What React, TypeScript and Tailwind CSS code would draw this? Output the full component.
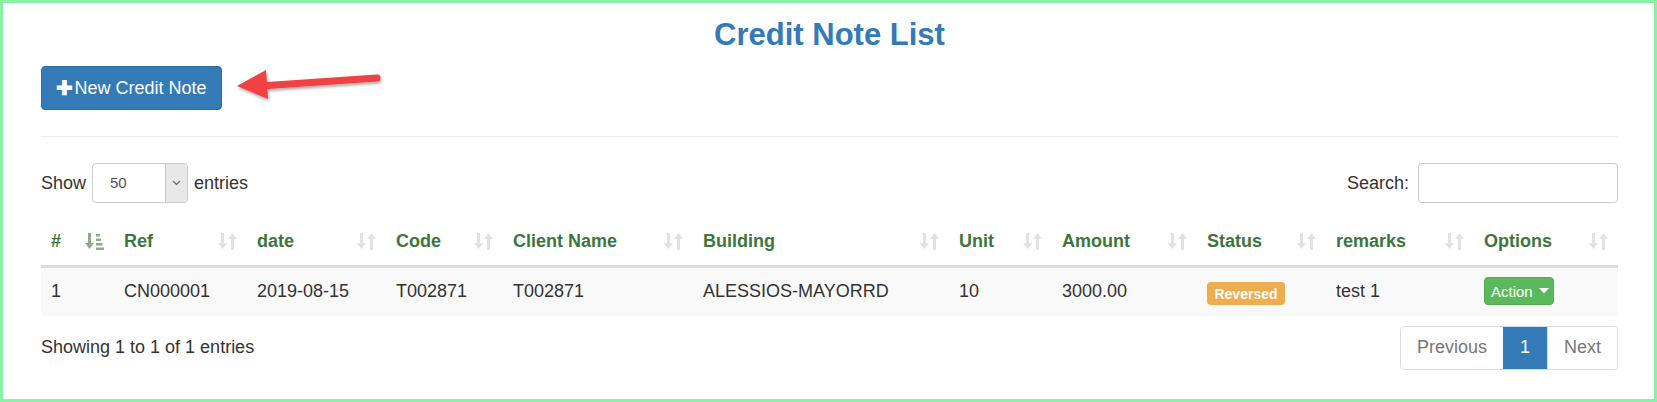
import React from "react";

function SortIcon() {
  return (
    <svg width="19" height="17" viewBox="0 0 19 17" className="shrink-0">
      <g fill="#e2e2e2">
        <rect x="3" y="0" width="3" height="11" />
        <polygon points="0,10 9,10 4.5,16" />
        <polygon points="10,6 19,6 14.5,0" />
        <rect x="13" y="5" width="3" height="12" />
      </g>
    </svg>
  );
}

function SortAscIcon() {
  return (
    <svg width="19" height="17" viewBox="0 0 19 17" className="shrink-0">
      <g fill="#3c763d" opacity="0.6">
        <rect x="3" y="0" width="3" height="11" />
        <polygon points="0,10 9,10 4.5,16" />
        <rect x="11" y="1" width="4" height="2.5" />
        <rect x="11" y="5.5" width="5" height="2.5" />
        <rect x="11" y="10" width="6.5" height="2.5" />
        <rect x="11" y="14.5" width="8" height="2.5" />
      </g>
    </svg>
  );
}

const cols = [
  { label: "#", w: 73, asc: true },
  { label: "Ref", w: 133 },
  { label: "date", w: 139 },
  { label: "Code", w: 117 },
  { label: "Client Name", w: 190 },
  { label: "Building", w: 256 },
  { label: "Unit", w: 103 },
  { label: "Amount", w: 145 },
  { label: "Status", w: 129 },
  { label: "remarks", w: 148 },
  { label: "Options", w: 144 },
];

const td = "px-[10px] pt-0 pb-[1px] leading-[26px] align-middle whitespace-nowrap";

export default function App() {
  return (
    <div className="w-[1657px] h-[402px] border-[3px] border-[#88f1a8] bg-white font-['Liberation_Sans',Arial,sans-serif] text-[#333] overflow-hidden">
      <div className="pl-[38px] pr-[36px]">
        <h1 className="mt-[15px] text-center text-[31px] leading-[34px] font-bold text-[#337ab7]">
          Credit Note List
        </h1>
        <div className="mt-[14px] flex items-start">
          <button className="w-[181px] h-[44px] bg-[#337ab7] border border-[#2e6da4] rounded-[4px] text-white text-[18px] leading-none flex items-center justify-center">
            <span className="font-bold text-[20px] mr-[1px] -mt-[1px]">✚</span>
            <span>New Credit Note</span>
          </button>
          <svg width="160" height="44" viewBox="0 0 160 44" className="ml-[8px]">
            <defs>
              <filter id="sh" x="-20%" y="-40%" width="140%" height="180%">
                <feDropShadow dx="1" dy="2" stdDeviation="1.5" floodColor="#000" floodOpacity="0.35" />
              </filter>
            </defs>
            <g filter="url(#sh)">
              <line x1="30" y1="20" x2="147" y2="12" stroke="#f04343" strokeWidth="7" strokeLinecap="round" />
              <polygon points="7,20 36,4 38,33" fill="#f04343" />
            </g>
          </svg>
        </div>
        <div className="mt-[26px] border-t border-[#eee]" />
        <div className="mt-[26px] flex justify-between items-center h-[40px] text-[18px]">
          <div className="flex items-center">
            <span>Show</span>
            <div className="ml-[6px] mr-[6px] w-[96px] h-[40px] border border-[#ccc] rounded-[4px] flex overflow-hidden">
              <div className="flex-1 flex items-center pl-[17px] text-[15px] text-[#555]">50</div>
              <div className="w-[22px] bg-[#e8e8e8] border-l border-[#c8c8c8] flex items-center justify-center">
                <svg width="9" height="6" viewBox="0 0 9 6">
                  <polyline points="1,1 4.5,4.5 8,1" fill="none" stroke="#666" strokeWidth="1.2" />
                </svg>
              </div>
            </div>
            <span>entries</span>
          </div>
          <div className="flex items-center">
            <span className="mr-[9px]">Search:</span>
            <div className="w-[200px] h-[40px] border border-[#ccc] rounded-[4px] bg-white" />
          </div>
        </div>
        <table className="mt-[16px] w-[1577px] table-fixed border-collapse text-[18px]">
          <colgroup>
            {cols.map((c) => (
              <col key={c.label} style={{ width: c.w }} />
            ))}
          </colgroup>
          <thead>
            <tr className="border-b-[3px] border-[#ddd]">
              {cols.map((c) => (
                <th key={c.label} className="px-[10px] pt-[9px] pb-[11px] text-left font-bold text-[#3c763d] leading-[26px]">
                  <div className="flex items-center justify-between">
                    <span className="whitespace-nowrap">{c.label}</span>
                    {c.asc ? <SortAscIcon /> : <SortIcon />}
                  </div>
                </th>
              ))}
            </tr>
          </thead>
          <tbody>
            <tr className="bg-[#f9f9f9] h-[49px]">
              {[
                "1",
                "CN000001",
                "2019-08-15",
                "T002871",
                "T002871",
                "ALESSIOS-MAYORRD",
                "10",
                "3000.00",
              ].map((v, i) => (
                <td key={i} className={td}>
                  {v}
                </td>
              ))}
              <td className={td}>
                <span className="inline-flex items-center justify-center w-[78px] h-[23px] rounded-[4px] bg-[#f0ad4e] text-white text-[14px] leading-none font-bold align-middle translate-y-[1px]">
                  Reversed
                </span>
              </td>
              <td className={td}>test 1</td>
              <td className={td}>
                <span className="inline-flex items-center w-[70px] h-[28px] rounded-[4px] bg-[#5cb85c] border border-[#4cae4c] text-white text-[15px] leading-none pl-[6px] align-middle">
                  Action
                  <svg width="10" height="6" viewBox="0 0 10 6" className="ml-[6px]">
                    <polygon points="0,0 10,0 5,5.5" fill="#fff" />
                  </svg>
                </span>
              </td>
            </tr>
          </tbody>
        </table>
        <div className="mt-[10px] flex justify-between items-center text-[18px]">
          <span>Showing 1 to 1 of 1 entries</span>
          <div className="flex h-[44px] border border-[#ddd] rounded-[4px] overflow-hidden">
            <div className="w-[102px] flex items-center justify-center text-[#777] bg-white">Previous</div>
            <div className="w-[44px] flex items-center justify-center text-white bg-[#337ab7]">1</div>
            <div className="w-[70px] flex items-center justify-center text-[#777] bg-white border-l border-[#ddd]">Next</div>
          </div>
        </div>
      </div>
    </div>
  );
}
